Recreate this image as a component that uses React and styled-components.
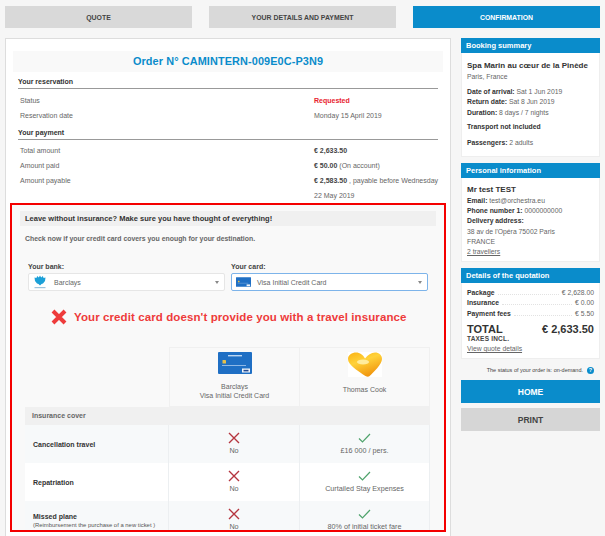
import React from 'react';
import styled, { createGlobalStyle } from 'styled-components';

const GlobalStyle = createGlobalStyle`
    html, body {
        margin: 0;
        padding: 0;
        height: 536px;
        overflow: hidden;
        background: #f6f6f6;
        font-family: "Liberation Sans", Arial, sans-serif;
        color: #555;
    }
    * { box-sizing: border-box; }
`;

const BLUE = '#0a8ccb';

const Page = styled.div`
    width: 605px;
    height: 536px;
    overflow: hidden;
    padding: 6px 5px 0 5px;
`;

const Tabs = styled.div`
    display: flex;
    justify-content: space-between;
    margin-bottom: 10px;
`;

const Tab = styled.div`
    width: 187px;
    height: 22px;
    display: flex;
    align-items: center;
    justify-content: center;
    font-size: 6.9px;
    font-weight: bold;
    background: ${props => props.$active ? BLUE : '#d9d9d9'};
    color: ${props => props.$active ? '#fff' : '#444'};
`;

const Columns = styled.div`
    display: flex;
    align-items: flex-start;
`;

const MainPanel = styled.div`
    width: 446px;
    height: 520px;
    flex: none;
    background: #fff;
    border: 1px solid #ddd;
    padding: 12px 4px 0 4px;
`;

const OrderTitle = styled.h1`
    margin: 0 3px 0 3px;
    height: 21px;
    line-height: 21px;
    background: #f9f9f9;
    color: ${BLUE};
    font-size: 10.9px;
    font-weight: bold;
    text-align: center;
    letter-spacing: 0.1px;
`;

const SectionTitle = styled.div`
    margin: 0 8px 0 8px;
    height: 17px;
    padding-top: 5px;
    line-height: 9px;
    font-size: 7px;
    font-weight: bold;
    color: #333;
    border-bottom: 1px solid #999;
`;

const InfoRows = styled.div`
    margin: ${props => props.$top}px 4px 0 8px;
`;

const InfoRow = styled.div`
    display: grid;
    grid-template-columns: 294px 1fr;
    padding-left: 2px;
    line-height: 14.7px;
    font-size: 7px;
    color: #666;
`;

const Strong = styled.b`
    color: #444;
`;

const Requested = styled.b`
    color: #e8222e;
`;

const InsuranceBox = styled.div`
    width: 436px;
    height: 329px;
    overflow: hidden;
    background: #f9f9f9;
    border: 2px solid #f40000;
    padding: 6px 8px 0 8px;
`;

const InsuranceHead = styled.div`
    height: 15px;
    line-height: 15px;
    padding-left: 5px;
    background: #f0f0f0;
    color: #333;
    font-size: 7.5px;
    font-weight: bold;
`;

const CheckNow = styled.p`
    margin: 8px 0 0 5px;
    line-height: 9px;
    font-size: 6.9px;
    font-weight: bold;
    color: #666;
`;

const Selectors = styled.div`
    display: grid;
    grid-template-columns: 197px 197px;
    column-gap: 6px;
    margin: 19px 0 0 8px;
`;

const FieldLabel = styled.div`
    font-size: 7px;
    line-height: 9px;
    font-weight: bold;
    color: #444;
    margin-bottom: 2px;
`;

const Select = styled.div`
    height: 18px;
    display: flex;
    align-items: center;
    background: #fff;
    border: 1px solid ${props => props.$focus ? '#7db4ea' : '#e6e6e6'};
    border-radius: 2px;
    padding: 0 5px 0 3px;
    font-size: 7px;
    color: #666;
`;

const SelectLogo = styled.span`
    width: 16px;
    display: flex;
    justify-content: center;
    margin-right: 6px;
    flex: none;
`;

const Caret = styled.span`
    margin-left: auto;
    width: 0;
    height: 0;
    border-left: 2.5px solid transparent;
    border-right: 2.5px solid transparent;
    border-top: 3px solid #888;
`;

const ErrorLine = styled.div`
    display: flex;
    align-items: center;
    margin: 17px 0 0 31px;
    height: 18px;
    gap: 7px;
    font-size: 11.5px;
    font-weight: bold;
    color: #ee3b3b;
    letter-spacing: 0.1px;
`;

const Compare = styled.div`
    display: grid;
    grid-template-columns: 144px 131px 130px;
    margin: 21px 0 0 5px;
    font-size: 7px;
    color: #666;
`;

const HeadBlank = styled.div`
    height: 60px;
`;

const HeadCell = styled.div`
    height: 60px;
    padding-top: 4px;
    border: 1px solid #f0f0f0;
    border-left-width: ${props => props.$noLeft ? 0 : '1px'};
    text-align: center;
    line-height: 9px;
`;

const Logo = styled.div`
    height: ${props => props.$tall ? '26px' : '22px'};
    margin-bottom: ${props => props.$tall ? '7px' : '8px'};
    display: flex;
    justify-content: center;
`;

const CoverTitle = styled.div`
    grid-column: 1 / 4;
    height: 18px;
    line-height: 18px;
    padding-left: 7px;
    background: #f0f0f0;
    font-weight: bold;
    color: #666;
`;

const RowLabel = styled.div`
    height: 38px;
    display: flex;
    flex-direction: column;
    justify-content: center;
    padding-left: 8px;
    background: ${props => props.$alt ? '#f7f9fa' : '#fff'};
    border-right: 1px solid #eceff1;
    font-size: 7px;
    line-height: 9px;
    font-weight: bold;
    color: #333;
`;

const RowNote = styled.span`
    font-weight: normal;
    font-size: 5.9px;
    line-height: 8px;
    color: #555;
`;

const RowCell = styled.div`
    height: 38px;
    display: flex;
    flex-direction: column;
    align-items: center;
    padding-top: 6px;
    background: ${props => props.$alt ? '#f7f9fa' : '#fff'};
    border-right: 1px solid #eceff1;
    font-size: 7.2px;
    line-height: 9px;
    color: #666;
`;

const MarkWrap = styled.span`
    height: 14px;
    margin-bottom: 1px;
    display: flex;
    align-items: center;
`;

const Sidebar = styled.div`
    margin-left: 10px;
    width: 139px;
    flex: none;
`;

const Card = styled.div`
    background: #fff;
    border: 1px solid #eee;
    border-top: none;
    margin-bottom: ${props => props.$gap}px;
    height: ${props => props.$height}px;
`;

const CardHead = styled.div`
    height: 15px;
    line-height: 15px;
    padding-left: 5px;
    background: ${BLUE};
    color: #fff;
    font-size: 7.5px;
    font-weight: bold;
`;

const CardBody = styled.div`
    padding: ${props => props.$top}px 5px 0 5px;
    font-size: 6.8px;
    line-height: 10.2px;
    color: #666;
`;

const CardName = styled.div`
    font-size: 8px;
    line-height: 11px;
    margin-bottom: 1px;
    font-weight: bold;
    color: #333;
`;

const Line = styled.div`
    margin-top: ${props => props.$gap || 0}px;
`;

const Label = styled.b`
    color: #333;
`;

const FakeLink = styled.span`
    text-decoration: underline;
`;

const PriceRow = styled.div`
    display: flex;
    align-items: baseline;
    line-height: 10.4px;
`;

const Dots = styled.span`
    flex: 1;
    margin: 0 3px;
    border-bottom: 1px dotted #e2e2e2;
`;

const TotalRow = styled.div`
    display: flex;
    justify-content: space-between;
    margin-top: 4px;
    font-size: 11px;
    line-height: 12px;
    font-weight: bold;
    color: #333;
`;

const TaxNote = styled.div`
    font-size: 6.5px;
    line-height: 8px;
    margin-bottom: 1px;
    font-weight: bold;
    color: #444;
    letter-spacing: 0.2px;
`;

const StatusNote = styled.div`
    display: flex;
    align-items: center;
    justify-content: flex-end;
    gap: 4px;
    height: 12px;
    margin: 5px 0 4px 0;
    padding-right: 6px;
    font-size: 5.5px;
    color: #444;
`;

const HelpDot = styled.span`
    width: 7px;
    height: 7px;
    border-radius: 50%;
    background: ${BLUE};
    color: #fff;
    font-size: 5.5px;
    line-height: 7px;
    font-weight: bold;
    text-align: center;
`;

const BigButton = styled.div`
    height: 23px;
    display: flex;
    align-items: center;
    justify-content: center;
    margin-bottom: 5px;
    font-size: 8.5px;
    font-weight: bold;
    background: ${props => props.$grey ? '#d6d6d6' : BLUE};
    color: ${props => props.$grey ? '#444' : '#fff'};
`;

const Barclays = () => (
    <svg width="12" height="14" viewBox="0 0 12 14">
        <path d="M6 0.5 L7.2 2.5 L8.8 1 L9.6 3 L11.5 2.5 L11 6 L9 8.5 L7.5 9 L6 10.5 L4.5 9 L3 8.5 L1 6 L0.5 2.5 L2.4 3 L3.2 1 L4.8 2.5 Z" fill="#1ba0d8" />
        <rect x="0.5" y="12" width="11" height="1.2" fill="#9cc4dd" />
    </svg>
);

const CardImage = ({ w, h, detail }) => (
    <svg width={w} height={h} viewBox="0 0 34 22">
        <rect width="34" height="22" rx="1" fill="#1f6fc4" />
        {detail && <rect x="10" y="3" width="14" height="1.4" fill="#bcd6f2" />}
        <rect x="4.5" y="8" width="3.5" height="3.5" rx="0.6" fill="#e6c04a" />
        <rect x="4" y="13" width="24" height="1" fill="#8fb8e6" />
        <rect x="24" y="16.5" width="8" height="4" fill="#f2f5f9" />
        {detail && <rect x="25.5" y="17.8" width="5" height="1.6" fill="#22488f" />}
    </svg>
);

const Heart = () => (
    <svg width="34" height="25" viewBox="0 0 34 25">
        <defs>
            <linearGradient id="sun" x1="0.1" y1="0" x2="0.6" y2="1">
                <stop offset="0" stopColor="#fbb516" />
                <stop offset="0.4" stopColor="#ffd23a" />
                <stop offset="1" stopColor="#f0930c" />
            </linearGradient>
        </defs>
        <rect width="34" height="25" fill="#fff" />
        <path d="M8 0.5 C12 0.5 15 3 17 6.5 C20 3 23 0.5 27 0.5 C31 0.5 34 3 34 7 C34 12 26 20 21 24.5 C19 25 17 24 15 22.5 C9 18 0 13 0 7 C0 3 4 0.5 8 0.5 Z" fill="url(#sun)" />
        <ellipse cx="15" cy="10" rx="6" ry="2.5" fill="#fff0a8" opacity="0.9" />
    </svg>
);

const Cross = () => (
    <svg width="12" height="12" viewBox="0 0 12 12">
        <path d="M1 1 L11 11 M11 1 L1 11" stroke="#b5353f" strokeWidth="1.4" fill="none" />
    </svg>
);

const Tick = () => (
    <svg width="13" height="10" viewBox="0 0 13 10">
        <path d="M1 5.5 L4.5 9 L12 1" stroke="#4fa36c" strokeWidth="1.2" fill="none" />
    </svg>
);

const BoldCross = () => (
    <svg width="16" height="16" viewBox="0 0 16 16">
        <path d="M2 2 L14 14 M14 2 L2 14" stroke="#ee3b3b" strokeWidth="4" fill="none" />
    </svg>
);

const covers = [
    { name: 'Cancellation travel', value: '£16 000 / pers.', alt: true },
    { name: 'Repatriation', value: 'Curtailed Stay Expenses' },
    { name: 'Missed plane', note: '(Reimbursement the purchase of a new ticket )', value: '80% of initial ticket fare', alt: true },
];

const App = () => {
    return (
        <Page>
            <GlobalStyle />
            <Tabs>
                <Tab>QUOTE</Tab>
                <Tab>YOUR DETAILS AND PAYMENT</Tab>
                <Tab $active>CONFIRMATION</Tab>
            </Tabs>
            <Columns>
                <MainPanel>
                    <OrderTitle>Order N° CAMINTERN-009E0C-P3N9</OrderTitle>
                    <SectionTitle>Your reservation</SectionTitle>
                    <InfoRows $top={5}>
                        <InfoRow><span>Status</span><Requested>Requested</Requested></InfoRow>
                        <InfoRow><span>Reservation date</span><span>Monday 15 April 2019</span></InfoRow>
                    </InfoRows>
                    <SectionTitle>Your payment</SectionTitle>
                    <InfoRows $top={4}>
                        <InfoRow><span>Total amount</span><Strong>€ 2,633.50</Strong></InfoRow>
                        <InfoRow><span>Amount paid</span><span><Strong>€ 50.00</Strong> (On account)</span></InfoRow>
                        <InfoRow><span>Amount payable</span><span><Strong>€ 2,583.50</Strong> , payable before Wednesday 22 May 2019</span></InfoRow>
                    </InfoRows>
                    <InsuranceBox>
                        <InsuranceHead>Leave without insurance? Make sure you have thought of everything!</InsuranceHead>
                        <CheckNow>Check now if your credit card covers you enough for your destination.</CheckNow>
                        <Selectors>
                            <div>
                                <FieldLabel>Your bank:</FieldLabel>
                                <Select>
                                    <SelectLogo><Barclays /></SelectLogo>
                                    Barclays
                                    <Caret />
                                </Select>
                            </div>
                            <div>
                                <FieldLabel>Your card:</FieldLabel>
                                <Select $focus>
                                    <SelectLogo><CardImage w={15} h={10} /></SelectLogo>
                                    Visa Initial Credit Card
                                    <Caret />
                                </Select>
                            </div>
                        </Selectors>
                        <ErrorLine>
                            <BoldCross />
                            Your credit card doesn't provide you with a travel insurance
                        </ErrorLine>
                        <Compare>
                            <HeadBlank />
                            <HeadCell>
                                <Logo><CardImage w={34} h={22} detail /></Logo>
                                Barclays<br />Visa Initial Credit Card
                            </HeadCell>
                            <HeadCell $noLeft>
                                <Logo $tall><Heart /></Logo>
                                Thomas Cook
                            </HeadCell>
                            <CoverTitle>Insurance cover</CoverTitle>
                            {covers.map((cover) => (
                                <React.Fragment key={cover.name}>
                                    <RowLabel $alt={cover.alt}>
                                        {cover.name}
                                        {cover.note && <RowNote>{cover.note}</RowNote>}
                                    </RowLabel>
                                    <RowCell $alt={cover.alt}><MarkWrap><Cross /></MarkWrap>No</RowCell>
                                    <RowCell $alt={cover.alt}><MarkWrap><Tick /></MarkWrap>{cover.value}</RowCell>
                                </React.Fragment>
                            ))}
                        </Compare>
                    </InsuranceBox>
                </MainPanel>
                <Sidebar>
                    <CardHead>Booking summary</CardHead>
                    <Card $height={104} $gap={6}>
                        <CardBody $top={7}>
                            <CardName>Spa Marin au cœur de la Pinède</CardName>
                            <Line>Paris, France</Line>
                            <Line $gap={5}><Label>Date of arrival:</Label> Sat 1 Jun 2019</Line>
                            <Line><Label>Return date:</Label> Sat 8 Jun 2019</Line>
                            <Line><Label>Duration:</Label> 8 days / 7 nights</Line>
                            <Line $gap={4}><Label>Transport not included</Label></Line>
                            <Line $gap={6}><Label>Passengers:</Label> 2 adults</Line>
                        </CardBody>
                    </Card>
                    <CardHead>Personal information</CardHead>
                    <Card $height={84} $gap={6}>
                        <CardBody $top={6}>
                            <CardName>Mr test TEST</CardName>
                            <Line><Label>Email:</Label> test@orchestra.eu</Line>
                            <Line><Label>Phone number 1:</Label> 0000000000</Line>
                            <Line><Label>Delivery address:</Label></Line>
                            <Line>38 av de l'Opéra 75002 Paris</Line>
                            <Line>FRANCE</Line>
                            <Line><FakeLink>2 travellers</FakeLink></Line>
                        </CardBody>
                    </Card>
                    <CardHead>Details of the quotation</CardHead>
                    <Card $height={76} $gap={0}>
                        <CardBody $top={5}>
                            <PriceRow><Label>Package</Label><Dots />€ 2,628.00</PriceRow>
                            <PriceRow><Label>Insurance</Label><Dots />€ 0.00</PriceRow>
                            <PriceRow><Label>Payment fees</Label><Dots />€ 5.50</PriceRow>
                            <TotalRow><span>TOTAL</span><span>€ 2,633.50</span></TotalRow>
                            <TaxNote>TAXES INCL.</TaxNote>
                            <Line><FakeLink>View quote details</FakeLink></Line>
                        </CardBody>
                    </Card>
                    <StatusNote>The status of your order is: on-demand. <HelpDot>?</HelpDot></StatusNote>
                    <BigButton>HOME</BigButton>
                    <BigButton $grey>PRINT</BigButton>
                </Sidebar>
            </Columns>
        </Page>
    );
}

export default App;
